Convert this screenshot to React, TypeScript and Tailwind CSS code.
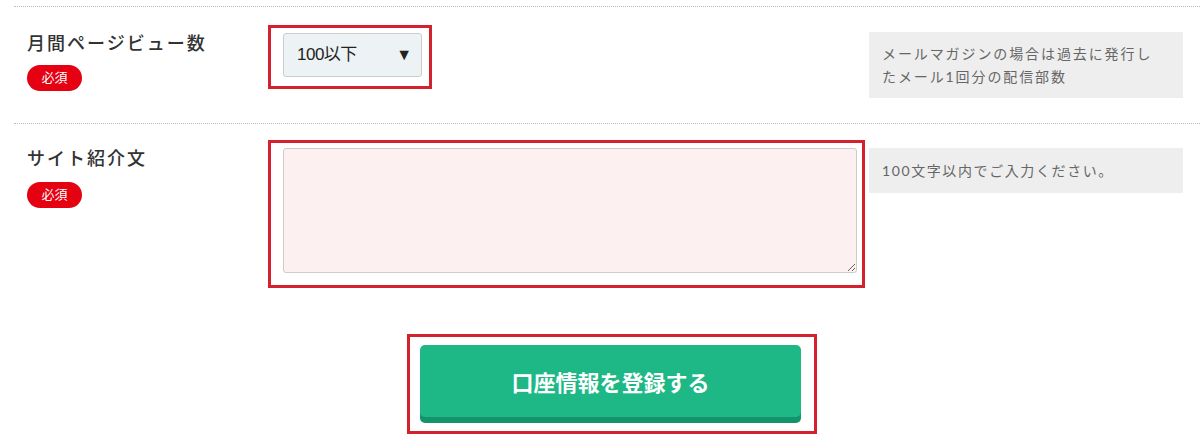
export default function App() {
  return (
    <div className="w-[1200px] h-[439px] bg-white text-[#333] font-['Lato','Noto_Sans_CJK_JP',sans-serif] overflow-hidden">
      <div className="pl-[14px] pt-[6px]">
        <div className="border-t border-dotted border-[#bbb]" />

        {/* monthly page views */}
        <div className="flex h-[116px]">
          <div className="w-[254px] pl-[13px] pt-[23px]">
            <div className="text-[18px] leading-[26px] font-medium tracking-[2px]">月間ページビュー数</div>
            <span className="mt-[9px] flex w-[55px] h-[26px] items-center justify-center rounded-full bg-[#e50012] text-[13px] text-white">必須</span>
          </div>
          <div className="w-[601px] pt-[18px]">
            <div className="w-[164px] h-[64px] border-[3px] border-[#d3212e] pl-[12px] pt-[5px]">
              <div className="flex w-[139px] h-[44px] items-center justify-between rounded-[3px] border border-[#ccc] bg-[#edf2f5] pl-[13px] pr-[9px] font-['Liberation_Sans','Noto_Sans_CJK_JP',sans-serif] text-[17px] text-[#222]">
                <span className="tracking-[-0.5px]">100以下</span>
                <span className="text-[16px]">▼</span>
              </div>
            </div>
          </div>
          <div className="mt-[25px] w-[314px] h-[66px] bg-[#eeeeee] pl-[13px] pr-[24px] py-[10px] text-[14px] leading-[23px] text-[#666] tracking-[1.9px]">
            メールマガジンの場合は過去に発行したメール1回分の配信部数
          </div>
        </div>

        <div className="border-t border-dotted border-[#bbb]" />

        {/* site intro */}
        <div className="flex h-[170px]">
          <div className="w-[254px] pl-[13px] pt-[21px]">
            <div className="text-[18px] leading-[26px] font-medium tracking-[2px]">サイト紹介文</div>
            <span className="mt-[11px] flex w-[55px] h-[26px] items-center justify-center rounded-full bg-[#e50012] text-[13px] text-white">必須</span>
          </div>
          <div className="w-[601px] pt-[16px]">
            <div className="w-[597px] h-[148px] border-[3px] border-[#d3212e] pl-[12px] pt-[5px]">
              <textarea className="block w-[574px] h-[125px] rounded-[3px] border border-[#ccc] bg-[#fdf0f0] outline-none" />
            </div>
          </div>
          <div className="mt-[24px] w-[314px] h-[45px] bg-[#eeeeee] px-[13px] flex items-center text-[14px] text-[#666] tracking-[1.6px]">
            100文字以内でご入力ください。
          </div>
        </div>
      </div>

      {/* submit */}
      <div className="pl-[407px] pt-[40px]">
        <div className="w-[410px] h-[100px] border-[3px] border-[#d3212e] pl-[10px] pt-[8px]">
          <button className="flex w-[381px] h-[72px] items-center justify-center rounded-[5px] bg-[#1eb886] shadow-[0_6px_0_#13946a] text-[22px] font-bold text-white font-['Noto_Sans_CJK_JP',sans-serif]">
            口座情報を登録する
          </button>
        </div>
      </div>
    </div>
  );
}
